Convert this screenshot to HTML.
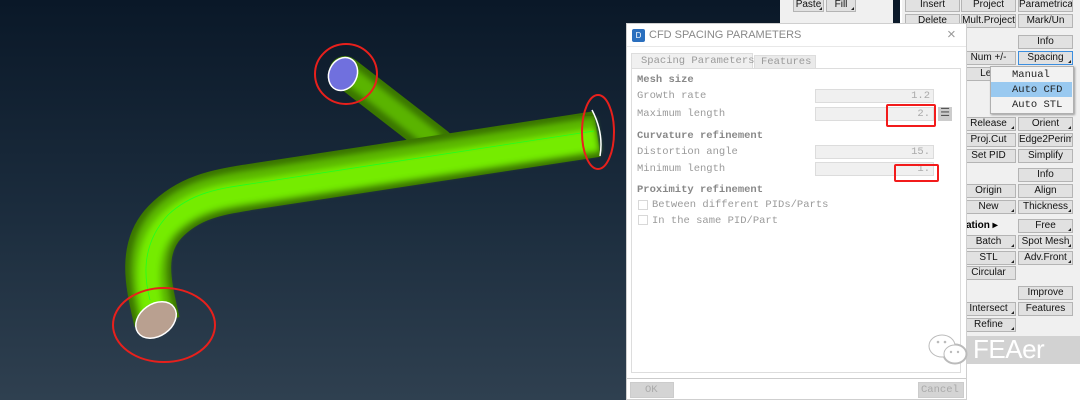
<!DOCTYPE html>
<html><head><meta charset="utf-8"><style>
*{margin:0;padding:0;box-sizing:border-box}
body{width:1080px;height:400px;overflow:hidden;position:relative;background:#fff;font-family:"Liberation Sans",sans-serif}
.a{position:absolute}
.vp{left:0;top:0;width:900px;height:400px;background:linear-gradient(#0a1828,#1c2d3e 55%,#2f4050)}
.panel{left:902px;top:0;width:178px;height:336px;background:#f0f0f0}
.top{left:780px;top:0;width:113px;height:23px;background:#f0f0f0}
.b{position:absolute;height:14px;background:#e1e1e1;border:1px solid #b4b4b4;font-size:10px;line-height:12px;text-align:center;color:#111;white-space:nowrap;overflow:hidden}
.b.t:after{content:"";position:absolute;right:1px;bottom:1px;border-left:3px solid transparent;border-bottom:3px solid #222}
.dlg{left:626px;top:23px;width:341px;height:377px;background:#fff;border:1px solid #cfcfcf}
.m{font-family:"Liberation Mono",monospace;font-size:10.5px;color:#9a9a9a;position:absolute;white-space:nowrap}
.h{font-weight:bold;color:#888}
.in{position:absolute;left:188px;width:119px;height:14px;background:#f0f0f0;border:1px solid #dcdcdc;font-family:"Liberation Mono",monospace;font-size:10.5px;color:#aaa;text-align:right;padding-right:3px;line-height:12px}
.red{position:absolute;border:2px solid #f21b1b;border-radius:2px}
.cb{position:absolute;width:10px;height:10px;border:1px solid #d8d8d8;background:#fff}
</style></head><body>
<div class="a vp"></div>
<svg class="a" style="left:0;top:0" width="630" height="400">
<defs>
<filter id="bl" x="-10%" y="-10%" width="120%" height="120%"><feGaussianBlur stdDeviation="3"/></filter>
</defs>
<g fill="none">
<path d="M345,72 L438,144" stroke="#3a7600" stroke-width="32" stroke-linecap="round"/>
<g filter="url(#bl)"><path d="M343,70 L436,142" stroke="#5ab400" stroke-width="18"/></g>
<path d="M157,322 C150,290 138,250 165,222 C190,196 220,192 250,187 L597,134" stroke="#3a7400" stroke-width="46"/>
<g filter="url(#bl)">
<path d="M157,322 C150,290 140,250 166,222 C191,197 220,193 250,188 L597,135" stroke="#5cb800" stroke-width="36"/>
<path d="M155,322 C148,290 141,250 168,223 C193,199 222,195 252,191 L597,139" stroke="#74ec00" stroke-width="22"/>
</g>
<path d="M150,300 C142,270 145,240 168,215 C192,192 222,188 250,184 L594,131" stroke="#20ff20" stroke-width="0.8"/>
</g>
<ellipse cx="343" cy="74" rx="14" ry="17" transform="rotate(25 343 74)" fill="#7070de" stroke="#fff" stroke-width="1.5"/>
<ellipse cx="156" cy="320" rx="22" ry="16" transform="rotate(-35 156 320)" fill="#b9a090" stroke="#fff" stroke-width="1.5"/>
<path d="M592,110 Q604,133 600,156" stroke="#fff" stroke-width="1.5" fill="none"/>
<ellipse cx="346" cy="74" rx="31" ry="30" fill="none" stroke="#e8201c" stroke-width="2"/>
<ellipse cx="598" cy="132" rx="16" ry="37" fill="none" stroke="#e8201c" stroke-width="2"/>
<ellipse cx="164" cy="325" rx="51" ry="37" fill="none" stroke="#e8201c" stroke-width="2"/>
</svg>
<div class="a top"></div>
<div class="b t" style="left:793px;top:-2px;width:31px">Paste</div>
<div class="b t" style="left:826px;top:-2px;width:30px">Fill</div>
<div class="a panel"></div>
<div class="a" style="left:902px;top:336px;width:178px;height:28px;background:#d2d2d2"></div>
<div class="b" style="left:905px;top:-2px;width:55px">Insert</div>
<div class="b" style="left:961px;top:-2px;width:55px">Project</div>
<div class="b" style="left:1018px;top:-2px;width:55px">Parametrical</div>
<div class="b" style="left:905px;top:14px;width:55px">Delete</div>
<div class="b" style="left:961px;top:14px;width:55px">Mult.Project</div>
<div class="b" style="left:1018px;top:14px;width:55px">Mark/Un</div>
<div class="b" style="left:1018px;top:35px;width:55px">Info</div>
<div class="b" style="left:961px;top:51px;width:55px">Num +/-</div>
<div class="b t" style="left:1018px;top:51px;width:55px;border-color:#3c8ede">Spacing</div>
<div class="b" style="left:961px;top:67px;width:55px">Len</div>
<div class="b t" style="left:961px;top:117px;width:55px">Release</div>
<div class="b t" style="left:1018px;top:117px;width:55px">Orient</div>
<div class="b" style="left:961px;top:133px;width:55px">Proj.Cut</div>
<div class="b" style="left:1018px;top:133px;width:55px">Edge2Perim.</div>
<div class="b" style="left:961px;top:149px;width:55px">Set PID</div>
<div class="b" style="left:1018px;top:149px;width:55px">Simplify</div>
<div class="b" style="left:1018px;top:168px;width:55px">Info</div>
<div class="b" style="left:961px;top:184px;width:55px">Origin</div>
<div class="b" style="left:1018px;top:184px;width:55px">Align</div>
<div class="b t" style="left:961px;top:200px;width:55px">New</div>
<div class="b t" style="left:1018px;top:200px;width:55px">Thickness</div>
<div class="a" style="left:966px;top:220px;font-size:10px;font-weight:bold">ation ▸</div>
<div class="b t" style="left:1018px;top:219px;width:55px">Free</div>
<div class="b t" style="left:961px;top:235px;width:55px">Batch</div>
<div class="b t" style="left:1018px;top:235px;width:55px">Spot Mesh</div>
<div class="b t" style="left:961px;top:251px;width:55px">STL</div>
<div class="b t" style="left:1018px;top:251px;width:55px">Adv.Front</div>
<div class="b" style="left:961px;top:266px;width:55px">Circular</div>
<div class="b" style="left:1018px;top:286px;width:55px">Improve</div>
<div class="b t" style="left:961px;top:302px;width:55px">Intersect</div>
<div class="b" style="left:1018px;top:302px;width:55px">Features</div>
<div class="b t" style="left:961px;top:318px;width:55px">Refine</div>
<div class="a" style="left:990px;top:66px;width:84px;height:48px;background:#f2f2f2;border:1px solid #b0b0b0;box-shadow:1px 1px 2px #999"></div>
<div class="m" style="left:1012px;top:69px;color:#222">Manual</div>
<div class="a" style="left:991px;top:82px;width:81px;height:15px;background:#99c9f0"></div>
<div class="m" style="left:1012px;top:84px;color:#222">Auto CFD</div>
<div class="m" style="left:1012px;top:99px;color:#222">Auto STL</div>
<div class="a dlg">
 <div class="a" style="left:5px;top:5px;width:13px;height:13px;background:#2a6fbe;border-radius:2px;color:#fff;font-size:8px;text-align:center;line-height:13px">D</div>
 <div class="a" style="left:22px;top:5px;font-size:11px;color:#888">CFD SPACING PARAMETERS</div>
 <div class="a" style="left:320px;top:2px;font-size:15px;color:#999">×</div>
 <div class="a" style="left:0;top:22px;width:339px;height:1px;background:#e8e8e8"></div>
 <div class="a" style="left:4px;top:29px;width:122px;height:16px;background:#f0f0f0;border:1px solid #ddd;border-bottom:none"></div>
 <div class="m" style="left:14px;top:31px">Spacing Parameters</div>
 <div class="a" style="left:127px;top:31px;width:62px;height:14px;background:#eaeaea;border:1px solid #ddd"></div>
 <div class="m" style="left:134px;top:32px">Features</div>
 <div class="a" style="left:4px;top:44px;width:330px;height:305px;border:1px solid #ddd"></div>
 <div class="m h" style="left:10px;top:50px">Mesh size</div>
 <div class="m" style="left:10px;top:66px">Growth rate</div>
 <div class="in" style="top:65px">1.2</div>
 <div class="m" style="left:10px;top:84px">Maximum length</div>
 <div class="in" style="top:83px">2.</div>
 <div class="a" style="left:311px;top:83px;width:14px;height:14px;background:#ccc;color:#555;font-size:11px;line-height:13px;text-align:center">☰</div>
 <div class="m h" style="left:10px;top:106px">Curvature refinement</div>
 <div class="m" style="left:10px;top:122px">Distortion angle</div>
 <div class="in" style="top:121px">15.</div>
 <div class="m" style="left:10px;top:139px">Minimum length</div>
 <div class="in" style="top:138px">1.</div>
 <div class="red" style="left:259px;top:80px;width:50px;height:23px"></div>
 <div class="red" style="left:267px;top:140px;width:45px;height:18px"></div>
 <div class="m h" style="left:10px;top:160px">Proximity refinement</div>
 <div class="cb" style="left:11px;top:176px"></div>
 <div class="m" style="left:25px;top:175px">Between different PIDs/Parts</div>
 <div class="cb" style="left:11px;top:191px"></div>
 <div class="m" style="left:25px;top:191px">In the same PID/Part</div>
 <div class="a" style="left:0;top:354px;width:339px;height:1px;background:#ccc"></div>
 <div class="a" style="left:3px;top:358px;width:44px;height:16px;background:#d4d4d4;border:1px solid #ccc"></div>
 <div class="m" style="left:18px;top:360px;color:#aaa">OK</div>
 <div class="a" style="left:291px;top:358px;width:46px;height:16px;background:#d4d4d4;border:1px solid #ccc"></div>
 <div class="m" style="left:294px;top:360px;color:#aaa">Cancel</div>
</div>
<svg class="a" style="left:928px;top:334px" width="44" height="32">
<g stroke="#bbb" stroke-width="3" fill="none">
<ellipse cx="14" cy="12" rx="12" ry="10"/>
<ellipse cx="27" cy="20" rx="11" ry="9"/>
</g>
<ellipse cx="14" cy="12" rx="12" ry="10" fill="#fff" stroke="#fff" stroke-width="1"/>
<ellipse cx="27" cy="20" rx="11" ry="9" fill="#fff" stroke="#bbb" stroke-width="1"/>
<circle cx="10" cy="8" r="1.3" fill="#bbb"/><circle cx="17" cy="8" r="1.3" fill="#bbb"/>
<circle cx="23" cy="18" r="1.2" fill="#bbb"/><circle cx="30" cy="18" r="1.2" fill="#bbb"/>
</svg>
<div class="a" style="left:973px;top:334px;font-size:26px;color:#fff;letter-spacing:-0.5px">FEAer</div>
</body></html>
